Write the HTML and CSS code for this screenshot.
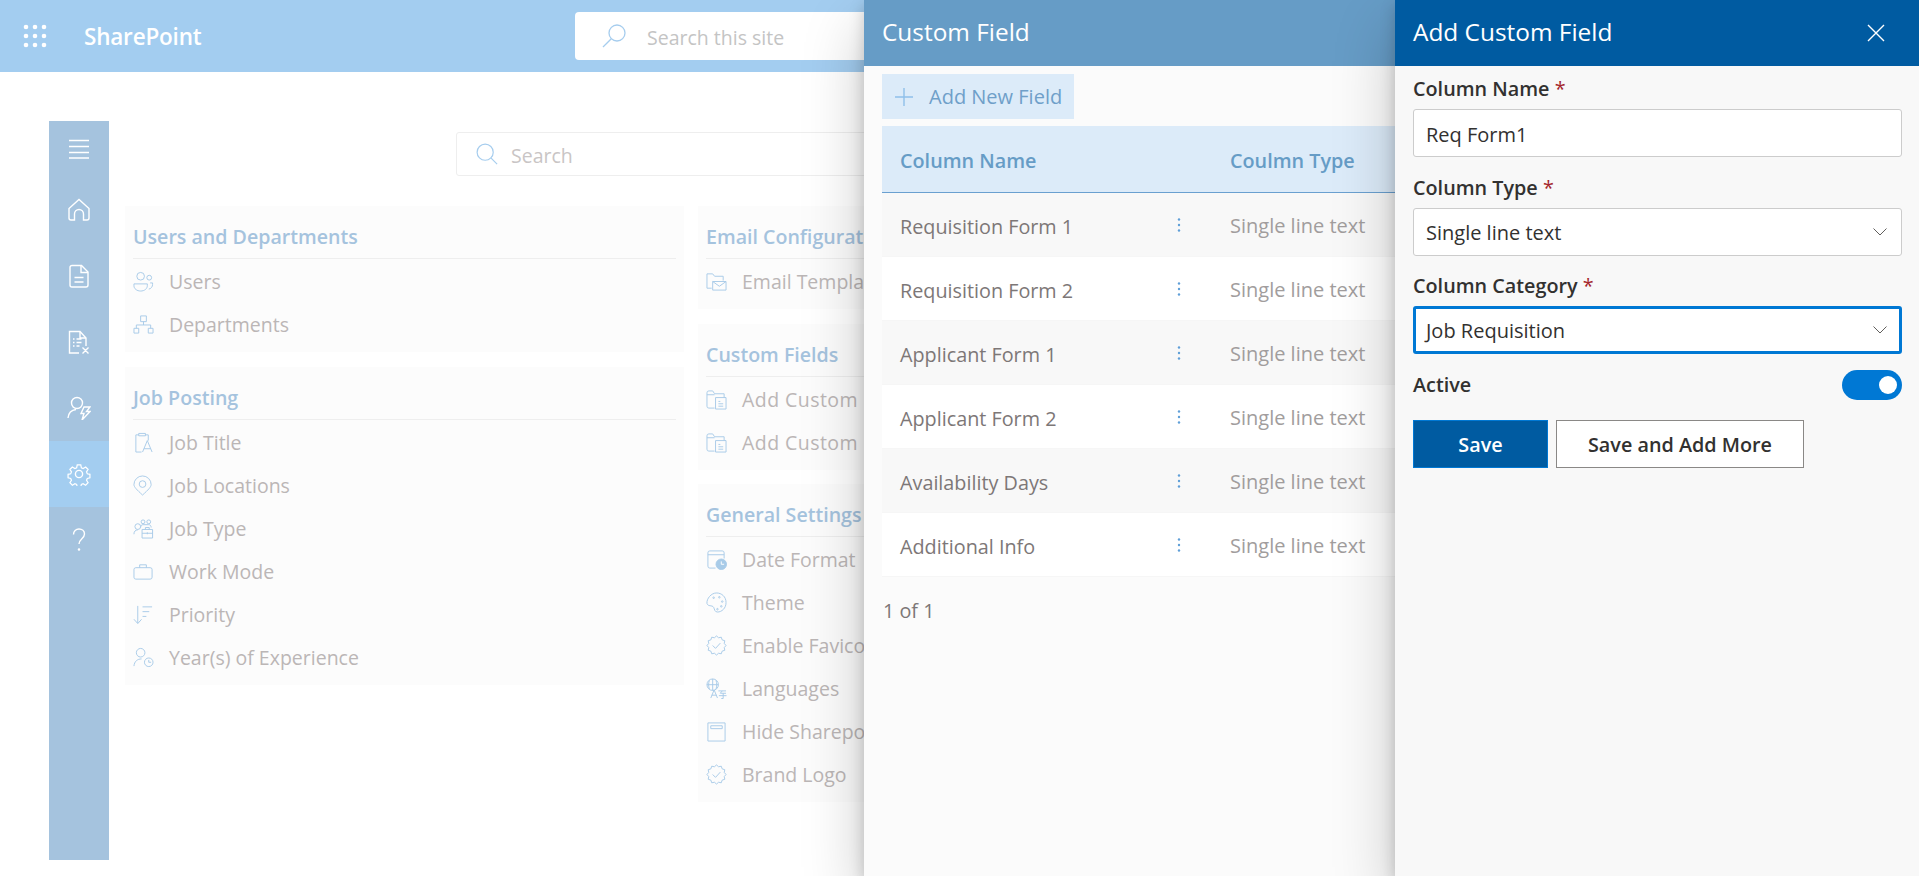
FILE: index.html
```html
<!DOCTYPE html>
<html lang="en">
<head>
<meta charset="utf-8">
<title>Add Custom Field</title>
<link rel="stylesheet" href="styles.css">
</head>
<body>
<header class="topbar">
  <svg class="waffle" viewBox="0 0 24 24"><g fill="#fff"><circle cx="3" cy="3" r="2.3"/><circle cx="12" cy="3" r="2.3"/><circle cx="21" cy="3" r="2.3"/><circle cx="3" cy="12" r="2.3"/><circle cx="12" cy="12" r="2.3"/><circle cx="21" cy="12" r="2.3"/><circle cx="3" cy="21" r="2.3"/><circle cx="12" cy="21" r="2.3"/><circle cx="21" cy="21" r="2.3"/></g></svg>
  <span class="brand">SharePoint</span>
  <div class="sitesearch">
    <svg class="sitesearch-icon" viewBox="0 0 24 24"><circle cx="15" cy="9" r="8" class="li"/><path d="M9.3 14.7 1 23" class="li"/></svg>
    <span class="nudge">Search this site</span>
  </div>
</header>
<div class="page">
  <nav class="rail">
    <div class="rail-item rail-first"><svg class="ri" viewBox="0 0 24 24"><path d="M2 3.500h20M2 9.500h20M2 15.500h20M2 21h20"/></svg></div>
    <div class="rail-item"><svg class="ri" viewBox="0 0 24 24"><path d="M2 20V10.500L12 1.500l10 9V20a2 2 0 0 1-2 2h-3.500V16a4.500 4.500 0 0 0-9 0v6H4a2 2 0 0 1-2-2Z"/></svg></div>
    <div class="rail-item"><svg class="ri" viewBox="0 0 24 24"><path d="M3 3.500A2 2 0 0 1 5 1.500h9.500L21 8v13a2 2 0 0 1-2 2H5a2 2 0 0 1-2-2Z"/><path d="M14 2v6.500h7M7.500 13.500h9M7.500 18h9"/></svg></div>
    <div class="rail-item"><svg class="ri" viewBox="0 0 24 24"><path d="M12 23H2.500V1.500H13L19 8v8"/><path d="M13 2v6h6M6 9h1.500M9.500 9h5M6 12.500h1.500M9.500 12.500h5M6 16h1.500M9.500 16h3M15.500 17.500l6 6M21.500 17.500l-6 6"/></svg></div>
    <div class="rail-item"><svg class="ri" viewBox="0 0 24 24"><circle cx="10" cy="7" r="5.500"/><path d="M1 22c.5-5 3.500-8 8-8.500"/><path d="M17 11h6l-3.500 4.500H23L15 24l2-6.500h-3Z"/></svg></div>
    <div class="rail-item rail-active"><svg class="ri" viewBox="0 0 24 24"><circle cx="12" cy="12" r="3.600"/><path d="M10 1.500h4l.7 3.300 2 .9 2.900-1.700 2.800 2.800-1.800 2.800.9 2.100 3 .7v4l-3 .7-.9 2 1.800 2.900-2.800 2.800-2.900-1.800-2 .9-.7 3.100h-4l-.7-3.100-2-.9-2.900 1.800-2.800-2.800 1.800-2.900-.9-2-3-.7v-4l3-.7.9-2.100-1.800-2.800 2.800-2.800 2.900 1.700 2-.9Z" transform="translate(1.500 1.500) scale(.875)"/></svg></div>
    <div class="rail-item"><svg class="ri" viewBox="0 0 24 24"><path d="M6.500 6.500C6.500 3 9 1 12 1s5.500 2 5.500 5c0 4.500-5.500 5-5.500 10"/><circle cx="12" cy="21.500" r=".6"/></svg></div>
  </nav>
  <main class="content">
    <div class="search">
      <svg class="search-icon" viewBox="0 0 24 24"><circle cx="10" cy="10" r="8.800" class="li"/><path d="m16.500 16.500 6.500 6.500" class="li"/></svg>
      <span class="nudge">Search</span>
    </div>
    <div class="columns">
      <div class="column">
        <section class="card">
          <h2>Users and Departments</h2>
          <div class="item"><svg class="ic" viewBox="0 0 22 22"><circle cx="8" cy="5.500" r="4"/><circle cx="17" cy="7" r="2.500"/><path d="M1 13.500h14v2c0 3-3 5.500-7 5.500s-7-2.500-7-5.500ZM18 12.500h2.500v1.500c0 2.500-1.500 4.500-4 5"/></svg>Users</div>
          <div class="item"><svg class="ic" viewBox="0 0 22 22"><path d="M8 2h6v6H8ZM1 15h5v5H1ZM16 15h5v5h-5ZM11 8v3.500M3.500 15v-3.500h15V15"/></svg>Departments</div>
        </section>
        <section class="card">
          <h2>Job Posting</h2>
          <div class="item"><svg class="ic" viewBox="0 0 22 22"><path d="M9 21H3V3h3M13 3h3v6M6 1.500h7V4H6ZM10 21l5-12 5 12M11.500 17.500h7"/></svg>Job Title</div>
          <div class="item"><svg class="ic" viewBox="0 0 22 22"><path d="M10 21C4 15.500 1 12.500 1 10a9 9 0 0 1 18 0c0 2.500-3 5.500-9 11Z"/><circle cx="10" cy="9.500" r="3.500"/></svg>Job Locations</div>
          <div class="item"><svg class="ic" viewBox="0 0 22 22"><circle cx="5" cy="9" r="3"/><path d="M1 17c0-3 1.500-4.500 4-4.500"/><circle cx="10.500" cy="4" r="2"/><circle cx="16.500" cy="4" r="2"/><path d="M8 10c0-2 1-3 2.500-3h6c1.500 0 2.500 1 2.500 3M9.500 12h11v9h-11ZM13 12v-2h4v2M9.500 16h11M15 15v2"/></svg>Job Type</div>
          <div class="item"><svg class="ic" viewBox="0 0 22 22"><path d="M3 7h15a2 2 0 0 1 2 2v8a2 2 0 0 1-2 2H3a2 2 0 0 1-2-2V9a2 2 0 0 1 2-2ZM7 7V4h7v3"/></svg>Work Mode</div>
          <div class="item"><svg class="ic" viewBox="0 0 22 22"><path d="M5 2v18M1 16l4 4.500L9 16M10 3h10M10 8h7M10 13h4"/></svg>Priority</div>
          <div class="item"><svg class="ic" viewBox="0 0 22 22"><circle cx="8" cy="6" r="4.500"/><path d="M1 20c.5-5 3.500-7.500 8-7.500"/><circle cx="16.500" cy="16" r="4.500"/><path d="M16.500 13.500V16h2.500"/></svg>Year(s) of Experience</div>
        </section>
      </div>
      <div class="column">
        <section class="card">
          <h2>Email Configuration</h2>
          <div class="item"><svg class="ic" viewBox="0 0 22 22"><path d="M6 18H1V3h6l2 2.500h9V10M7 11h14v9H7ZM7 11l7 5 7-5"/></svg>Email Templates</div>
        </section>
        <section class="card">
          <h2>Custom Fields</h2>
          <div class="item item-wide"><svg class="ic" viewBox="0 0 22 22"><path d="M9 20H3a2 2 0 0 1-2-2V4a2 2 0 0 1 2-2h4l2 3h10v4M1 6h8M10 9h11v12H10ZM13 13h2M13 15.500h5M13 18h5"/></svg>Add Custom Fields</div>
          <div class="item item-wide"><svg class="ic" viewBox="0 0 22 22"><path d="M9 20H3a2 2 0 0 1-2-2V4a2 2 0 0 1 2-2h4l2 3h10v4M1 6h8M10 9h11v12H10ZM13 13h2M13 15.500h5M13 18h5"/></svg>Add Custom Columns</div>
        </section>
        <section class="card">
          <h2>General Settings</h2>
          <div class="item"><svg class="ic" viewBox="0 0 22 22"><path d="M10 20H4a2 2 0 0 1-2-2V4a2 2 0 0 1 2-2h13a2 2 0 0 1 2 2v6M2 6h17"/><circle cx="16" cy="16" r="5.500" class="ic-fill"/><path d="M16 13v3h3" class="ic-cut"/></svg>Date Format</div>
          <div class="item"><svg class="ic" viewBox="0 0 22 22"><path d="M11 1c5.500 0 10 4 10 10 0 6-4.500 10-9 10-3 0-3-3-4-5-1.500-2.500-6-.5-7-4C.500 7 5.500 1 11 1Z"/><circle cx="8" cy="6" r=".8"/><circle cx="14" cy="5.500" r=".8"/><circle cx="17" cy="10" r=".8"/><circle cx="16" cy="15" r=".8"/><circle cx="12" cy="18" r=".8"/></svg>Theme</div>
          <div class="item"><svg class="ic" viewBox="0 0 22 22"><path d="M11 1l2.200 1.900L16 2.300l.9 2.800 2.800.9-.6 2.800L21 11l-1.900 2.200.6 2.800-2.800.9-.9 2.800-2.800-.6L11 21l-2.200-1.900-2.800.6-.9-2.800-2.800-.9.6-2.800L1 11l1.900-2.200L2.300 6l2.800-.9L6 2.300l2.800.6ZM7 11l3 3 5-5.500"/></svg>Enable Favicon</div>
          <div class="item"><svg class="ic" viewBox="0 0 22 22"><circle cx="7" cy="7" r="6"/><path d="M1 7h12M7 1v12M3.500 2.500c-1 3-1 6 0 9M10.500 2.500c1 3 1 6 0 9M5 21l3.500-8.500L12 21M6 18h5M13 13.500h8M17 13.500 15 16h6M18 16v5.500h-2M13.500 18.500h8"/></svg>Languages</div>
          <div class="item"><svg class="ic" viewBox="0 0 22 22"><path d="M2 2h18v19H2ZM5 5h12v3H5Z"/></svg>Hide Sharepoint Menu</div>
          <div class="item"><svg class="ic" viewBox="0 0 22 22"><path d="M11 1l2.200 1.900L16 2.300l.9 2.800 2.800.9-.6 2.800L21 11l-1.900 2.200.6 2.800-2.800.9-.9 2.800-2.800-.6L11 21l-2.200-1.900-2.800.6-.9-2.800-2.800-.9.6-2.800L1 11l1.900-2.200L2.300 6l2.800-.9L6 2.300l2.800.6ZM7 11l3 3 5-5.500"/></svg>Brand Logo</div>
        </section>
      </div>
    </div>
  </main>
</div>

<aside class="panel panel-list">
  <div class="panel-head panel-head-muted"><span class="head-text">Custom Field</span></div>
  <div class="panel-list-body">
    <div class="add-btn"><svg class="plus" viewBox="0 0 20 20"><path d="M10 1v18M1 10h18"/></svg>Add New Field</div>
    <div class="thead"><span>Column Name</span><span></span><span>Coulmn Type</span></div>
    <div class="trow"><span class="tname">Requisition Form 1</span><svg class="dots" viewBox="0 0 4 14"><circle cx="2" cy="1.500" r="1.200"/><circle cx="2" cy="7" r="1.200"/><circle cx="2" cy="12.500" r="1.200"/></svg><span class="ttype">Single line text</span></div>
    <div class="trow"><span class="tname">Requisition Form 2</span><svg class="dots" viewBox="0 0 4 14"><circle cx="2" cy="1.500" r="1.200"/><circle cx="2" cy="7" r="1.200"/><circle cx="2" cy="12.500" r="1.200"/></svg><span class="ttype">Single line text</span></div>
    <div class="trow"><span class="tname">Applicant Form 1</span><svg class="dots" viewBox="0 0 4 14"><circle cx="2" cy="1.500" r="1.200"/><circle cx="2" cy="7" r="1.200"/><circle cx="2" cy="12.500" r="1.200"/></svg><span class="ttype">Single line text</span></div>
    <div class="trow"><span class="tname">Applicant Form 2</span><svg class="dots" viewBox="0 0 4 14"><circle cx="2" cy="1.500" r="1.200"/><circle cx="2" cy="7" r="1.200"/><circle cx="2" cy="12.500" r="1.200"/></svg><span class="ttype">Single line text</span></div>
    <div class="trow"><span class="tname">Availability Days</span><svg class="dots" viewBox="0 0 4 14"><circle cx="2" cy="1.500" r="1.200"/><circle cx="2" cy="7" r="1.200"/><circle cx="2" cy="12.500" r="1.200"/></svg><span class="ttype">Single line text</span></div>
    <div class="trow"><span class="tname">Additional Info</span><svg class="dots" viewBox="0 0 4 14"><circle cx="2" cy="1.500" r="1.200"/><circle cx="2" cy="7" r="1.200"/><circle cx="2" cy="12.500" r="1.200"/></svg><span class="ttype">Single line text</span></div>
    <div class="pager">1 of 1</div>
  </div>
</aside>

<aside class="panel panel-form">
  <div class="panel-head panel-head-strong">
    <span class="head-text">Add Custom Field</span>
    <svg class="close" viewBox="0 0 18 18"><path d="m1 1 16 16M17 1 1 17"/></svg>
  </div>
  <form class="form">
    <div class="fields">
      <div class="field">
        <label class="label">Column Name <em>*</em></label>
        <div class="control"><span class="nudge">Req Form1</span></div>
      </div>
      <div class="field">
        <label class="label">Column Type <em>*</em></label>
        <div class="control control-select"><span class="nudge">Single line text</span><svg class="chev" viewBox="0 0 14 8"><path d="m.5.5 6.500 6.500L13.500.5"/></svg></div>
      </div>
      <div class="field">
        <label class="label">Column Category <em>*</em></label>
        <div class="control control-select control-focus"><span>Job Requisition</span><svg class="chev" viewBox="0 0 14 8"><path d="m.5.5 6.500 6.500L13.500.5"/></svg></div>
      </div>
    </div>
    <div class="active-row">
      <span class="label">Active</span>
      <span class="toggle"><span class="knob"></span></span>
    </div>
    <div class="actions">
      <button type="button" class="btn btn-primary">Save</button>
      <button type="button" class="btn btn-plain">Save and Add More</button>
    </div>
  </form>
</aside>
</body>
</html>
```
FILE: styles.css
```css
* { box-sizing: border-box; }
html, body { margin: 0; height: 876px; overflow: hidden; }
body { background: #fff; font-family: "Open Sans", "Noto Sans", sans-serif; font-size: 19.5px; color: #333; }

.li { fill: none; stroke: #a6cdee; stroke-width: 1.3; }
.nudge { padding-top: 2px; }

.topbar { height: 72px; background: #a3cdf0; display: flex; align-items: center; padding-left: 23px; }
.waffle { width: 24px; height: 24px; flex: none; }
.brand { margin-left: 37px; width: 491px; flex: none; color: #fff; font-size: 22.500px; font-weight: 600; letter-spacing: -.2px; }
.sitesearch { width: 560px; height: 48px; background: #fff; border-radius: 4px; display: flex; align-items: center; padding-left: 27px; color: #c4c4c4; flex: none; }
.sitesearch-icon { width: 24px; height: 24px; margin-right: 21px; }

.page { display: flex; padding: 49px 0 0 49px; }
.rail { width: 60px; height: 739px; background: #a5c3de; flex: none; }
.rail-item { height: 66px; display: flex; align-items: center; justify-content: center; }
.rail-first { height: 56px; }
.rail-active { background: #a3cdf0; }
.ri { width: 24px; height: 24px; fill: none; stroke: #fff; stroke-width: 1.4; }

.content { margin-left: 16px; padding-top: 11px; flex: 1; }
.search { margin-left: 331px; width: 800px; height: 44px; border: 1px solid #eee; border-radius: 3px; display: flex; align-items: center; padding-left: 19px; color: #c9c5c5; }
.search-icon { width: 22px; height: 22px; margin-right: 13px; }
.columns { display: grid; grid-template-columns: 559px 559px; column-gap: 14px; margin-top: 30px; }
.column { display: flex; flex-direction: column; gap: 14.500px; }
.card { background: #fcfcfc; padding: 0 8px 6px; }
.card h2 { margin: 0 0 1px; padding: 19px 0 9px; height: 53px; line-height: 24px; font-size: 19.600px; font-weight: 600; color: #a5c3de; border-bottom: 1px solid #eee; white-space: nowrap; }
.item { height: 43px; display: flex; align-items: center; color: #bbb6b6; white-space: nowrap; }
.item-wide { letter-spacing: .45px; }
.ic { width: 21px; height: 21px; margin-right: 15px; flex: none; fill: none; stroke: #a8cbe8; stroke-width: 1; stroke-linejoin: round; }
.ic-fill { fill: #a8cbe8; }
.ic-cut { stroke: #fff; }

.panel { position: absolute; top: 0; bottom: 0; box-shadow: 0 25.6px 57.6px rgba(0,0,0,.22), 0 4.8px 14.4px rgba(0,0,0,.18); overflow: hidden; }
.panel-list { left: 864px; right: 0; background: #fbfbfb; }
.panel-form { left: 1395px; right: 0; background: #f8f8f8; }
.panel-head { height: 66px; display: flex; align-items: center; color: #fff; font-size: 24.400px; }
.head-text { position: relative; top: -2px; }
.panel-head-muted { background: #669cc6; padding-left: 18px; }
.panel-head-strong { background: #005ba1; padding: 0 34px 0 18px; justify-content: space-between; }
.close { width: 18px; height: 18px; fill: none; stroke: #fff; stroke-width: 1.4; }

.panel-list-body { padding: 8px 0 0 18px; }
.add-btn { width: 192px; height: 45px; background: #dcebf9; color: #6f9fc9; display: flex; align-items: center; padding-left: 12px; font-size: 20px; }
.plus { width: 20px; height: 20px; margin-right: 15px; fill: none; stroke: #8fc0ea; stroke-width: 1.4; }
.thead, .trow { display: grid; grid-template-columns: 262px 68px 1fr; align-items: center; padding-left: 18px; }
.thead { margin-top: 7px; height: 67px; padding-top: 2px; background: #dcebf9; border-bottom: 1px solid #6aa0d0; color: #669cc6; font-weight: 600; font-size: 19.800px; }
.trow { height: 64px; background: #fff; border-bottom: 1px solid #f6f6f6; color: #7d7777; font-size: 19.800px; }
.trow:nth-of-type(odd) { background: #f8f8f8; }
.tname { padding-top: 3px; }
.ttype { color: #a19d9d; font-size: 20px; padding-top: 1px; }
.dots { width: 4px; height: 14px; fill: #5f9fd8; margin-left: 15px; }
.pager { margin: 22px 0 0 1px; line-height: 24px; color: #7d7777; font-size: 19.800px; }

.form { padding: 11px 17px 0 18px; color: #323130; font-size: 20px; }
.fields { display: flex; flex-direction: column; gap: 18.500px; }
.field { display: flex; flex-direction: column; gap: 8px; }
.label { line-height: 24px; font-weight: 600; font-size: 19.800px; color: #323130; }
.label em { font-style: normal; color: #a4262c; font-weight: 400; }
.control { height: 48px; background: #fff; border: 1px solid #ccc; border-radius: 3px; display: flex; align-items: center; padding: 0 12px; color: #323130; }
.control-select { justify-content: space-between; padding-right: 14px; }
.control-focus { border: 3px solid #0078d4; padding: 0 12px 0 10px; }
.chev { width: 14px; height: 8px; fill: none; stroke: #605e5c; stroke-width: 1; }
.active-row { margin-top: 16px; height: 30px; display: flex; align-items: center; justify-content: space-between; }
.toggle { width: 60px; height: 30px; border-radius: 15px; background: #0078d4; display: flex; align-items: center; justify-content: flex-end; padding-right: 5px; }
.knob { width: 18px; height: 18px; border-radius: 50%; background: #fff; }
.actions { margin-top: 20px; display: flex; gap: 8px; }
.btn { height: 48px; font: 600 19.800px "Open Sans", "Noto Sans", sans-serif; }
.btn-primary { width: 135px; background: #005ba1; color: #fff; border: 1px solid #0078d4; }
.btn-plain { width: 248px; background: #fff; color: #323130; border: 1px solid #8a8886; }
```
